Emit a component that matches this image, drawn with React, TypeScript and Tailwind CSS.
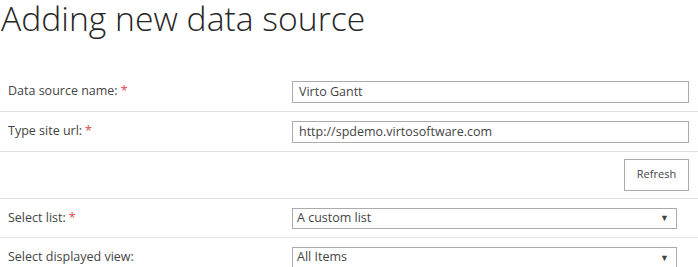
import React from "react";

const labelCls = "w-[292px] pl-[8px] text-[12.5px] text-[#444444]";
const Star = () => <span className="text-[#e0474c] ml-[3px]">*</span>;

export default function App() {
  return (
    <div className="w-[698px] h-[267px] overflow-hidden bg-white" style={{ fontFamily: '"Open Sans", "Noto Sans", sans-serif' }}>
      <div className="h-[72px] pl-[1px] pt-[0px]">
        <h1 className="text-[33.7px] leading-[34px] pt-[1px] font-light text-[#262626] whitespace-nowrap">
          Adding new data source
        </h1>
      </div>
      <div className="flex items-center h-[40px] border-b border-[#e1e1e1]">
        <div className={labelCls}>Data source name:<Star /></div>
        <div className="w-[397px] h-[22px] border border-[#ababab] px-[6px] text-[12.5px] leading-[20px] text-[#444444]">Virto Gantt</div>
      </div>
      <div className="flex items-center h-[40px] border-b border-[#e1e1e1]">
        <div className={labelCls}>Type site url:<Star /></div>
        <div className="w-[397px] h-[22px] border border-[#ababab] px-[6px] text-[12.5px] leading-[20px] text-[#444444]">http://spdemo.virtosoftware.com</div>
      </div>
      <div className="flex items-center justify-end h-[47px] border-b border-[#e1e1e1] pr-[9px] pb-[1px]">
        <div className="w-[65px] h-[32px] border border-[#ababab] flex items-center justify-center text-[11px] text-[#444444]">Refresh</div>
      </div>
      <div className="flex items-center h-[39px] border-b border-[#e1e1e1]">
        <div className={labelCls}>Select list:<Star /></div>
        <div className="w-[385px] h-[21px] border border-[#ababab] pl-[4px] pr-[7px] flex items-center justify-between text-[12.5px] text-[#444444]">
          <span>A custom list</span>
          <span className="text-[9px] text-[#444444]">▼</span>
        </div>
      </div>
      <div className="flex items-center h-[39px]">
        <div className={labelCls}>Select displayed view:</div>
        <div className="w-[385px] h-[21px] border border-[#ababab] pl-[4px] pr-[7px] flex items-center justify-between text-[12.5px] text-[#444444]">
          <span>All Items</span>
          <span className="text-[9px] text-[#444444]">▼</span>
        </div>
      </div>
    </div>
  );
}
